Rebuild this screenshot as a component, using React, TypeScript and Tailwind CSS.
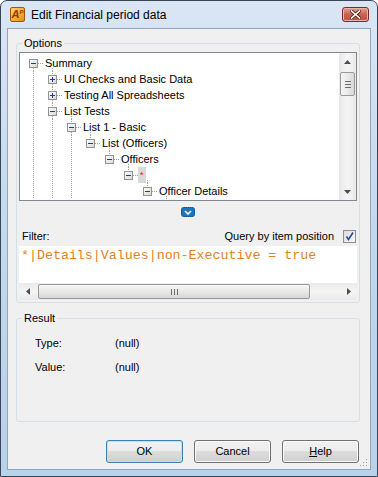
import React from "react";

type TreeRow = {
  label: string;
  depth: number;
  expanded: boolean;
  hasNext: boolean;
  selected?: boolean;
};

// continuation flags for the ancestor columns of the open branch
const guides = [true, true, true, false, false, false];

const rows: TreeRow[] = [
  { label: "Summary", depth: 0, expanded: true, hasNext: true },
  { label: "UI Checks and Basic Data", depth: 1, expanded: false, hasNext: true },
  { label: "Testing All Spreadsheets", depth: 1, expanded: false, hasNext: true },
  { label: "List Tests", depth: 1, expanded: true, hasNext: true },
  { label: "List 1 - Basic", depth: 2, expanded: true, hasNext: true },
  { label: "List (Officers)", depth: 3, expanded: true, hasNext: false },
  { label: "Officers", depth: 4, expanded: true, hasNext: false },
  { label: "*", depth: 5, expanded: true, hasNext: false, selected: true },
  { label: "Officer Details", depth: 6, expanded: true, hasNext: false },
];

const LINE = "#a0a0a0";

function GuideCell({ on }: { on: boolean }) {
  return (
    <svg width="19" height="16" className="shrink-0">
      {on && <line x1="9.5" y1="0" x2="9.5" y2="16" stroke={LINE} strokeDasharray="1 1" />}
    </svg>
  );
}

function ExpanderCell({ row, first }: { row: TreeRow; first: boolean }) {
  return (
    <svg width="19" height="16" className="shrink-0">
      {!first && <line x1="9.5" y1="0" x2="9.5" y2="4" stroke={LINE} strokeDasharray="1 1" />}
      {row.hasNext && <line x1="9.5" y1="13" x2="9.5" y2="16" stroke={LINE} strokeDasharray="1 1" />}
      <line x1="14" y1="8.5" x2="19" y2="8.5" stroke={LINE} strokeDasharray="1 1" />
      <defs>
        <linearGradient id="exp" x1="0" y1="0" x2="1" y2="1">
          <stop offset="0" stopColor="#ffffff" />
          <stop offset="1" stopColor="#d6d6d6" />
        </linearGradient>
      </defs>
      <rect x="5.5" y="4.5" width="8" height="8" fill="url(#exp)" stroke="#939393" />
      <line x1="7" y1="8.5" x2="12" y2="8.5" stroke="#1d3e8e" />
      {!row.expanded && <line x1="9.5" y1="6" x2="9.5" y2="11" stroke="#1d3e8e" />}
    </svg>
  );
}

function OptionsTree() {
  return (
    <div className="flex h-[149px] border border-[#828790] bg-white">
      <div className="flex-1 overflow-hidden pl-[4px] pt-[2px]">
        {rows.map((row, i) => (
          <div key={i} className="flex h-[16px] items-center">
            {guides.slice(0, row.depth).map((on, g) => (
              <GuideCell key={g} on={on} />
            ))}
            <ExpanderCell row={row} first={i === 0} />
            <span
              className={
                "relative h-[16px] whitespace-nowrap px-[2px] leading-[16px] " +
                (row.selected ? "bg-[#d9d9d9] text-[9px] text-[#e01010]" : "text-black")
              }
            >
              {row.label}
              {row.expanded && (
                <span className="absolute left-[9px] top-[13px] h-[3px] border-l border-dotted border-[#a0a0a0]" />
              )}
            </span>
          </div>
        ))}
      </div>
      {/* vertical scroll bar */}
      <div className="flex w-[17px] flex-col bg-gradient-to-r from-[#e9e9e9] via-[#f5f5f5] to-[#e9e9e9]">
        <div className="flex h-[17px] items-center justify-center">
          <svg width="7" height="4"><path d="M0 4 L3.5 0 L7 4 Z" fill="#4d4d4d" /></svg>
        </div>
        <div className="mx-[1px] mt-[2px] flex h-[24px] flex-col items-center justify-center gap-[2px] rounded-[2px] border border-[#9a9a9a] bg-gradient-to-r from-[#f6f6f6] via-[#e9e9e9] to-[#d8d8d8]">
          <span className="h-px w-[6px] bg-[#6d6d6d]" />
          <span className="h-px w-[6px] bg-[#6d6d6d]" />
          <span className="h-px w-[6px] bg-[#6d6d6d]" />
        </div>
        <div className="flex-1" />
        <div className="flex h-[17px] items-center justify-center">
          <svg width="7" height="4"><path d="M0 0 L7 0 L3.5 4 Z" fill="#4d4d4d" /></svg>
        </div>
      </div>
    </div>
  );
}

function FilterBox() {
  return (
    <div className="flex h-[54px] flex-col bg-white">
      <div className="flex-1 px-[2px] pt-[2px] font-['Liberation_Mono','Courier_New',monospace] text-[13.3px] leading-[16px] text-[#e5801f]">
        *|Details|Values|non-Executive = true
      </div>
      {/* horizontal scroll bar */}
      <div className="flex h-[17px] items-center bg-gradient-to-b from-[#e9e9e9] via-[#f5f5f5] to-[#e9e9e9]">
        <div className="flex w-[17px] items-center justify-center">
          <svg width="4" height="7"><path d="M4 0 L0 3.5 L4 7 Z" fill="#4d4d4d" /></svg>
        </div>
        <div className="ml-[2px] flex h-[15px] w-[272px] items-center justify-center gap-[2px] rounded-[2px] border border-[#9a9a9a] bg-gradient-to-b from-[#f6f6f6] via-[#e9e9e9] to-[#d6d6d6]">
          <span className="h-[6px] w-px bg-[#6d6d6d]" />
          <span className="h-[6px] w-px bg-[#6d6d6d]" />
          <span className="h-[6px] w-px bg-[#6d6d6d]" />
        </div>
        <div className="flex-1" />
        <div className="flex w-[17px] items-center justify-center">
          <svg width="4" height="7"><path d="M0 0 L4 3.5 L0 7 Z" fill="#4d4d4d" /></svg>
        </div>
      </div>
    </div>
  );
}

function DialogButton({ children, focused }: { children: React.ReactNode; focused?: boolean }) {
  return (
    <button
      className={
        "h-[23px] w-[77px] rounded-[3px] border bg-[linear-gradient(#f2f2f2_0%,#ebebeb_50%,#dddddd_50%,#cfcfcf_100%)] text-[11px] text-black " +
        (focused
          ? "border-[#3c7fb1] shadow-[inset_0_0_0_1px_#b8e3f7]"
          : "border-[#707070] shadow-[inset_0_0_0_1px_#fbfbfb]")
      }
    >
      {children}
    </button>
  );
}

export default function App() {
  return (
    <div className="h-[477px] w-[378px] bg-white font-['Liberation_Sans',Arial,sans-serif] text-[11px]">
      <div className="flex h-full flex-col rounded-t-[7px] border border-[#3a4756] bg-gradient-to-b from-[#dae6f4] via-[#c3d7ed] to-[#bad1ea] px-[6px] pb-[6px]">
        {/* title bar */}
        <div className="flex h-[27px] items-center pl-[3px] pr-[2px]">
          <div className="flex h-[15px] w-[15px] items-start justify-center rounded-[2px] border border-[#a3550a] bg-gradient-to-br from-[#ffd36a] to-[#e98a12] pt-[1px] text-[11px] font-bold italic leading-[11px] text-[#8a3b00]">
            A<span className="text-[6px] leading-[6px]">P</span>
          </div>
          <span className="ml-[6px] text-[12px] text-black">Edit Financial period data</span>
          <div className="ml-auto flex h-[15px] w-[27px] items-center justify-center rounded-[3px] border border-[#7c2b22] bg-gradient-to-b from-[#e3a293] via-[#c8604f] to-[#c9503a] shadow-[inset_0_0_0_1px_#eab3a8]">
            <svg width="11" height="9" viewBox="0 0 11 9">
              <path d="M1.5 1 L9.5 8 M9.5 1 L1.5 8" stroke="#5a2119" strokeWidth="3.2" strokeLinecap="square" />
              <path d="M1.5 1 L9.5 8 M9.5 1 L1.5 8" stroke="#ffffff" strokeWidth="1.6" strokeLinecap="square" />
            </svg>
          </div>
        </div>

        {/* client area */}
        <div className="relative flex flex-1 flex-col border border-[#8ea6c1] bg-[#f0f0f0]">
          <fieldset className="ml-[8px] mt-[7px] w-[344px] rounded-[3px] border border-[#d5dfe5] px-[2px] pb-[2px]">
            <legend className="ml-[3px] px-[2px] leading-[14px] text-black">Options</legend>
            <div className="pt-[2px]">
              <OptionsTree />
            </div>
            <div className="flex h-[26px] justify-center pt-[6px]">
              <div className="flex h-[10px] w-[14px] items-center justify-center rounded-[3px] border border-dotted border-[#0b4f8a] bg-[#1f73b8]">
                <svg width="8" height="5" viewBox="0 0 8 5">
                  <path d="M1 1 L4 4 L7 1" stroke="#ffffff" strokeWidth="1.6" fill="none" />
                </svg>
              </div>
            </div>
            <div className="flex h-[19px] items-center pl-[3px] pr-[1px]">
              <span className="text-black">Filter:</span>
              <span className="ml-auto text-black">Query by item position</span>
              <span className="ml-[9px] flex h-[13px] w-[13px] items-center justify-center border border-[#8f8f8f] bg-gradient-to-br from-[#dcdcdc] to-[#f8f8f8]">
                <svg width="9" height="9" viewBox="0 0 9 9">
                  <path d="M1.5 4.5 L3.5 7.5 L8 0.5" stroke="#2a4aa0" strokeWidth="1.6" fill="none" />
                </svg>
              </span>
            </div>
            <FilterBox />
          </fieldset>

          <fieldset className="ml-[8px] mt-[8px] h-[111px] w-[344px] rounded-[3px] border border-[#d5dfe5]">
            <legend className="ml-[5px] px-[2px] leading-[14px] text-black">Result</legend>
            <div className="flex flex-col gap-[8px] pl-[18px] pt-[10px] text-black">
              <div className="flex h-[16px] items-center">
                <span className="w-[80px]">Type:</span>
                <span>(null)</span>
              </div>
              <div className="flex h-[16px] items-center">
                <span className="w-[80px]">Value:</span>
                <span>(null)</span>
              </div>
            </div>
          </fieldset>

          <div className="mt-[18px] flex justify-end gap-[11px] pr-[11px]">
            <DialogButton focused>OK</DialogButton>
            <DialogButton>Cancel</DialogButton>
            <DialogButton>
              <span className="underline">H</span>elp
            </DialogButton>
          </div>

          {/* size grip */}
          <svg width="9" height="9" className="absolute bottom-[2px] right-[2px]">
            {[
              [7, 1],
              [7, 4],
              [4, 4],
              [7, 7],
              [4, 7],
              [1, 7],
            ].map(([x, y], i) => (
              <rect key={i} x={x} y={y} width="1" height="1" fill="#a0a0a0" />
            ))}
          </svg>
        </div>
      </div>
    </div>
  );
}
